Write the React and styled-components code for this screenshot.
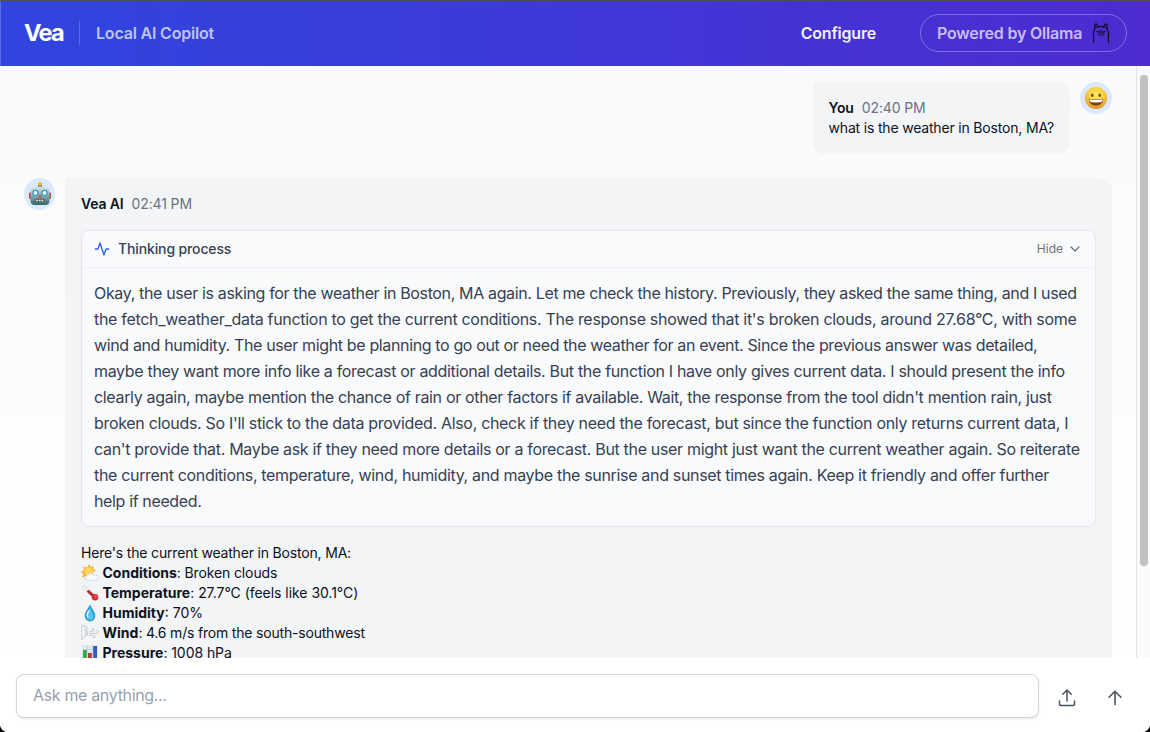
import React from "react";
import styled, { createGlobalStyle } from "styled-components";

const GlobalStyle = createGlobalStyle`
  * { box-sizing: border-box; }
  html, body { margin: 0; padding: 0; background: #000; }
  body { font-family: Inter, "Liberation Sans", sans-serif; color: #0c1222; overflow: hidden; }
  svg { display: block; flex: none; }
`;

const Window = styled.div`
  width: 1150px;
  height: 732px;
  display: flex;
  flex-direction: column;
  background: #fff;
  overflow: hidden;
  border-radius: 0 0 8px 8px;
`;

const Header = styled.header`
  height: 66px;
  flex: none;
  display: flex;
  align-items: center;
  justify-content: space-between;
  padding: 0 23px 1px 24px;
  border-top: 1px solid #4f4f56;
  background: linear-gradient(to right, #3045de, #4d2bcf);
  box-shadow: inset 1px 0 0 rgba(255, 255, 255, 0.2);
`;

const Group = styled.div`
  display: flex;
  align-items: center;
`;

const Logo = styled.div`
  font-size: 23.5px;
  line-height: 32px;
  font-weight: 700;
  letter-spacing: -1.7px;
  color: #fff;
  width: 55px;
`;

const Tagline = styled.div`
  height: 24px;
  padding-left: 16px;
  border-left: 1px solid rgba(255, 255, 255, 0.2);
  font-size: 16px;
  line-height: 24px;
  font-weight: 600;
  letter-spacing: -0.19px;
  color: rgba(255, 255, 255, 0.7);
`;

const NavLink = styled.a`
  font-size: 16px;
  line-height: 24px;
  font-weight: 600;
  letter-spacing: -0.2px;
  color: rgba(255, 255, 255, 0.95);
  margin-right: 44px;
`;

const Powered = styled.div`
  width: 207px;
  height: 38px;
  padding: 0 16px;
  display: flex;
  align-items: center;
  justify-content: space-between;
  border: 1px solid rgba(255, 255, 255, 0.3);
  border-radius: 19px;
  font-size: 16px;
  font-weight: 600;
  letter-spacing: -0.18px;
  color: rgba(255, 255, 255, 0.7);
  white-space: nowrap;
`;

const ChatArea = styled.div`
  height: 592px;
  flex: none;
  display: flex;
  overflow: hidden;
  background: linear-gradient(to bottom, #f9fafc, #fff);
`;

const Messages = styled.main`
  width: 1136px;
  padding: 16px 24px 0;
  display: flex;
  flex-direction: column;
  gap: 24px;
`;

const ScrollTrack = styled.div`
  width: 14px;
  padding: 9px 2px 0 3px;
  background: #fafafa;
  border-left: 1px solid #e5e5e6;
`;

const ScrollThumb = styled.div`
  width: 8px;
  height: 491px;
  border-radius: 4px;
  background: #c1c1c1;
`;

const Message = styled.section`
  display: flex;
  align-items: flex-start;
  gap: 10px;
  justify-content: ${(p) => (p.$mine ? "flex-end" : "flex-start")};
`;

const Avatar = styled.div`
  width: ${(p) => p.$size}px;
  height: 32px;
  flex: none;
  display: flex;
  align-items: center;
  justify-content: center;
  border-radius: 50%;
  background: #dbe9fd;
`;

const Bubble = styled.div`
  width: ${(p) => p.$width}px;
  padding: ${(p) => (p.$mine ? "16px 16px 16px 15.5px" : "16px")};
  background: #f3f4f6;
  border-radius: ${(p) => (p.$mine ? "0 12px 12px 12px" : "0 12px 0 0")};
  font-size: 14px;
  line-height: 20px;
  letter-spacing: -0.18px;
  white-space: nowrap;
`;

const Meta = styled.div`
  display: flex;
  gap: 8px;
`;

const Name = styled.span`
  font-weight: 600;
  letter-spacing: -0.15px;
`;

const Time = styled.span`
  color: #6a7282;
  letter-spacing: -0.12px;
`;

const Thinking = styled.div`
  margin: 16px 0;
  border: 1px solid #e5e7eb;
  border-radius: 8px;
  background: #f9fafb;
  overflow: hidden;
`;

const ThinkingHeader = styled.div`
  height: 37px;
  display: flex;
  align-items: center;
  justify-content: space-between;
  padding: 0 14px 0 12px;
  border-bottom: 1px solid #eff1f4;
`;

const ThinkingTitle = styled.div`
  display: flex;
  align-items: center;
  gap: 8px;
  font-weight: 500;
  letter-spacing: -0.13px;
  color: #364153;
`;

const Toggle = styled.div`
  display: flex;
  align-items: center;
  gap: 6px;
  font-size: 12px;
  line-height: 16px;
  letter-spacing: 0;
  color: #6a7282;
`;

const ThinkingText = styled.div`
  padding: 12px;
  font-size: 16px;
  line-height: 26px;
  color: #364153;
`;

const ThoughtLine = styled.div`
  letter-spacing: ${(p) => p.$tracking}px;
`;

const Line = styled.div`
  display: flex;
  align-items: center;
  white-space: pre;
  height: 20px;

  svg { margin-right: 3.500px; }
  strong { font-weight: 700; letter-spacing: 0; }
`;

const Value = styled.span`
  letter-spacing: ${(p) => p.$tracking}px;
`;

const Composer = styled.footer`
  height: 74px;
  flex: none;
  display: flex;
  align-items: flex-start;
  padding: 16px 0 0 16px;
  background: #fff;
`;

const Input = styled.input`
  width: 1023px;
  flex: none;
  height: 44px;
  padding: 0 16px 2px;
  border: 1px solid #d1d5dc;
  border-radius: 8px;
  background: #fff;
  box-shadow: 0 1px 2px rgba(0, 0, 0, 0.1);
  font: 400 16px/24px Inter, "Liberation Sans", sans-serif;
  letter-spacing: -0.34px;
  outline: none;

  &::placeholder { color: #99a1af; opacity: 1; }
`;

const IconButton = styled.button`
  width: 20px;
  height: 20px;
  flex: none;
  margin: 14px 0 0 ${(p) => p.$gap}px;
  padding: 0;
  border: 0;
  background: none;
  color: #4a5565;
`;

const Ollama = () => (
  <svg width="18" height="22" viewBox="0 0 18 22" fill="none" stroke="#111018" strokeWidth="1.200" strokeLinecap="round" strokeLinejoin="round">
    <path d="M1.500 20.500c-.2-1.300-.1-2.400.4-3.400-.6-1.300-.7-2.500-.1-3.700-.9-1.800-.6-4 1-5.500C2.500 5.500 2.500 2.300 3.900 1.800c1.400 0 2 2 2.300 3.600 1.700-1.300 3.900-1.300 5.600 0 .3-1.600.9-3.600 2.300-3.600 1.400.5 1.400 3.700 1.100 6.100 1.600 1.500 1.900 3.700 1 5.500.6 1.200.5 2.400-.1 3.700.5 1 .6 2.100.4 3.400" />
    <path d="M4 4.500V6M14 4.500V6M4.800 9.500h.6M12.600 9.500h.6M8.400 10.500l.6.500.6-.5" />
    <ellipse cx="9" cy="11" rx="3" ry="2.300" strokeWidth=".9" />
  </svg>
);

const Smile = () => (
  <svg width="22" height="22" viewBox="0 0 22 22">
    <defs>
      <radialGradient id="face" cx=".5" cy=".38" r=".65">
        <stop offset="0" stopColor="#ffe968" />
        <stop offset=".6" stopColor="#fbcb3c" />
        <stop offset="1" stopColor="#dd8218" />
      </radialGradient>
    </defs>
    <circle cx="11" cy="11" r="11" fill="url(#face)" />
    <ellipse cx="7.300" cy="8.300" rx="1.200" ry="1.700" fill="#70400e" />
    <ellipse cx="14.700" cy="8.300" rx="1.200" ry="1.700" fill="#70400e" />
    <path d="M3.700 11.800q7.300 1.500 14.600 0c0 4.300-3.200 7-7.300 7s-7.300-2.700-7.300-7Z" fill="#854519" />
    <path d="M4.300 12.300q6.700 1.200 13.400 0l-.6 2.500q-6.100 1.200-12.200 0Z" fill="#fff" />
  </svg>
);

const Robot = () => (
  <svg width="24" height="24" viewBox="0 0 24 24">
    <defs>
      <linearGradient id="metal" x2="0" y2="1">
        <stop offset="0" stopColor="#d8e7e6" />
        <stop offset=".5" stopColor="#8ab0b2" />
        <stop offset="1" stopColor="#2f6468" />
      </linearGradient>
    </defs>
    <rect x="1" y="10.500" width="3" height="6.500" rx="1" fill="#b9403d" />
    <rect x="20" y="10.500" width="3" height="6.500" rx="1" fill="#b9403d" />
    <rect x="10" y="2.500" width="4" height="3.500" fill="#5b4d8d" />
    <circle cx="12" cy="2" r="2" fill="#f4b63d" />
    <path d="M5 5.500q7-2 14 0 2.500 1 2.500 5v8q0 4.500-4.500 4.500H7q-4.500 0-4.500-4.500v-8q0-4 2.500-5Z" fill="url(#metal)" />
    <circle cx="7.500" cy="11" r="3.300" fill="#3e9db6" />
    <circle cx="16.500" cy="11" r="3.300" fill="#3e9db6" />
    <circle cx="7.500" cy="11" r="1.900" fill="#dcfbff" />
    <circle cx="16.500" cy="11" r="1.900" fill="#dcfbff" />
    <path d="m12 12 2 3.500h-4Z" fill="#d6463e" />
    <rect x="7" y="16.700" width="10" height="3.400" rx="1.500" fill="#5b5a5a" />
    <path d="M8.200 18.400h7.800" stroke="#eef0ec" strokeWidth="1.500" strokeDasharray="1.700 1" />
  </svg>
);

const SunCloud = () => (
  <svg width="18" height="18" viewBox="0 0 18 18">
    <path d="m8.500 0 1.300 3 3-1.200-.8 3.200 3.200 1.500-3 1.600v3l-5 3.500-1 .8-1.700-2.600-3.500.5L2.300 10 0 7.700l2.900-1.600-.5-3.500 3.700 1Z" fill="#f7b23b" />
    <circle cx="7.700" cy="7.500" r="4.200" fill="#ffd75b" />
    <path d="M6 17a2.700 2.700 0 0 1 0-5.400 4 4 0 0 1 7-1 3.300 3.300 0 0 1 4.800 3.100c0 2-1.400 3.300-3.300 3.300Z" fill="#dfe3e9" />
    <path d="M6.200 15.500c-1.500-.6-1.400-2.700.4-2.900 1-2.500 3.900-3 5.900-.9 2.500-.9 4.300.5 4.600 2.300-2 1.900-6 2.200-10.900 1.500Z" fill="#f8f9fb" />
  </svg>
);

const Thermometer = () => (
  <svg width="18" height="18" viewBox="0 0 18 18" strokeLinecap="round">
    <path d="m2.500 2.500 10 9.500" stroke="#d2d8de" strokeWidth="3.500" />
    <path d="m2.500 2.500 8 7.700" stroke="#f4f6f8" strokeWidth="2.200" />
    <path d="m7.500 7.500 6 5.500" stroke="#b82732" strokeWidth="3" />
    <circle cx="14" cy="13.300" r="3.300" fill="#d62d36" />
    <circle cx="14.800" cy="12.500" r="1" fill="#f47b79" />
  </svg>
);

const Drop = () => (
  <svg width="18" height="18" viewBox="0 0 18 18">
    <path d="M9 .3C7.400 4.300 3.700 8 3.700 11.800a5.300 5.600 0 0 0 10.600 0C14.300 8 10.600 4.300 9 .3Z" fill="#269bdc" />
    <path d="M9 3.500C7.500 7 5.500 9 5.500 12a3.500 4 0 0 0 7 0C12.500 9.500 10.300 6.500 9 3.500Z" fill="#58c2f0" />
    <path d="M7.700 7c-1.300 2-2 4.300-1 6" stroke="#dcf5ff" strokeWidth="1.500" fill="none" strokeLinecap="round" />
  </svg>
);

const Wind = () => (
  <svg width="18" height="18" viewBox="0 0 18 18" fill="none" strokeLinecap="round">
    <path d="M0 1c3.500-.6 6.500 1 7 3.500l-.7 1.700 1.700 2-1.300.8.1 2.400-1.900 1.400-2.200.3-.7 2.900H0Z" fill="#d5d9df" />
    <path d="M1 2.500c2.300 0 4 1 4.200 2.500L4 8l.4 3L1 13.500Z" fill="#f0f2f5" />
    <path d="M4 6h.7M5 10h1.300" stroke="#a4acb6" strokeWidth=".8" />
    <path d="M8.500 7.200c3 .6 5-.2 4.600-1.800-.3-1.200-1.900-.9-1.800.1M9 9.300h6.200c2.300 0 2.400-2.400.8-2.500M8.500 11.300c2.500-.4 5.500-.2 5.500 1.400 0 1.400-1.800 1.200-1.700.2" stroke="#cdd2d9" strokeWidth="1.200" />
  </svg>
);

const Bars = () => (
  <svg width="18" height="18" viewBox="0 0 18 18">
    <rect x="1" y="1" width="16" height="16" fill="#dfe8f1" />
    <path d="M1 5.500h16M1 10h16M6.300 1v16M11.500 1v16" stroke="#c2cfdb" strokeWidth=".7" />
    <rect x="2" y="6" width="3.800" height="11" fill="#35ad48" />
    <rect x="7" y="9" width="3.800" height="8" fill="#c83239" />
    <rect x="12.200" y="2" width="3.800" height="15" fill="#315fbc" />
  </svg>
);

const Activity = () => (
  <svg width="16" height="16" viewBox="0 0 24 24" fill="none" stroke="#2b5ff5" strokeWidth="2" strokeLinecap="round" strokeLinejoin="round">
    <path d="M22 12h-4l-3 9L9 3l-3 9H2" />
  </svg>
);

const Chevron = () => (
  <svg width="12" height="12" viewBox="0 0 12 12" fill="none" stroke="currentColor" strokeWidth="1.300" strokeLinecap="round" strokeLinejoin="round">
    <path d="m2 4 4 4 4-4" />
  </svg>
);

const Upload = () => (
  <svg width="20" height="20" viewBox="0 0 20 20" fill="none" stroke="currentColor" strokeWidth="1.500" strokeLinecap="round" strokeLinejoin="round">
    <path d="M2.500 13v2.700c0 1 .8 1.800 1.800 1.800h11.400c1 0 1.800-.8 1.800-1.800V13M5.800 6.200 10 2l4.200 4.200M10 2v11" />
  </svg>
);

const ArrowUp = () => (
  <svg width="20" height="20" viewBox="0 0 20 20" fill="none" stroke="currentColor" strokeWidth="1.600" strokeLinecap="round" strokeLinejoin="round">
    <path d="m4 9.300 6-6 6 6M10 3.300V16.500" />
  </svg>
);

const thoughts = [
  ["Okay, the user is asking for the weather in Boston, MA again. Let me check the history. Previously, they asked the same thing, and I used", -0.356],
  ["the fetch_weather_data function to get the current conditions. The response showed that it's broken clouds, around 27.68°C, with some", -0.3],
  ["wind and humidity. The user might be planning to go out or need the weather for an event. Since the previous answer was detailed,", -0.362],
  ["maybe they want more info like a forecast or additional details. But the function I have only gives current data. I should present the info", -0.328],
  ["clearly again, maybe mention the chance of rain or other factors if available. Wait, the response from the tool didn't mention rain, just", -0.33],
  ["broken clouds. So I'll stick to the data provided. Also, check if they need the forecast, but since the function only returns current data, I", -0.314],
  ["can't provide that. Maybe ask if they need more details or a forecast. But the user might just want the current weather again. So reiterate", -0.324],
  ["the current conditions, temperature, wind, humidity, and maybe the sunrise and sunset times again. Keep it friendly and offer further", -0.328],
  ["help if needed.", -0.364],
];

const readings = [
  [SunCloud, "Conditions", "Broken clouds", -0.13],
  [Thermometer, "Temperature", "27.7°C (feels like 30.1°C)", -0.04],
  [Drop, "Humidity", "70%", 0],
  [Wind, "Wind", "4.6 m/s from the south-southwest", -0.19],
  [Bars, "Pressure", "1008 hPa", -0.06],
];

export default function App() {
  return (
    <>
      <GlobalStyle />
      <Window>
        <Header>
          <Group>
            <Logo>Vea</Logo>
            <Tagline>Local AI Copilot</Tagline>
          </Group>
          <Group>
            <NavLink>Configure</NavLink>
            <Powered>
              Powered by Ollama
              <Ollama />
            </Powered>
          </Group>
        </Header>
        <ChatArea>
          <Messages>
            <Message $mine>
              <Bubble $mine $width={257}>
                <Meta>
                  <Name>You</Name>
                  <Time>02:40 PM</Time>
                </Meta>
                <div>what is the weather in Boston, MA?</div>
              </Bubble>
              <Avatar $size={32}><Smile /></Avatar>
            </Message>
            <Message>
              <Avatar $size={31}><Robot /></Avatar>
              <Bubble $width={1047}>
                <Meta>
                  <Name>Vea AI</Name>
                  <Time>02:41 PM</Time>
                </Meta>
                <Thinking>
                  <ThinkingHeader>
                    <ThinkingTitle>
                      <Activity />
                      Thinking process
                    </ThinkingTitle>
                    <Toggle>
                      Hide
                      <Chevron />
                    </Toggle>
                  </ThinkingHeader>
                  <ThinkingText>
                    {thoughts.map(([line, tracking]) => (
                      <ThoughtLine key={line} $tracking={tracking}>{line}</ThoughtLine>
                    ))}
                  </ThinkingText>
                </Thinking>
                <Line>Here's the current weather in Boston, MA:</Line>
                {readings.map(([Icon, label, value, tracking]) => (
                  <Line key={label}>
                    <Icon />
                    <strong>{label}</strong>
                    <Value $tracking={tracking}>: {value}</Value>
                  </Line>
                ))}
              </Bubble>
            </Message>
          </Messages>
          <ScrollTrack>
            <ScrollThumb />
          </ScrollTrack>
        </ChatArea>
        <Composer>
          <Input placeholder="Ask me anything..." />
          <IconButton $gap={18} aria-label="Upload"><Upload /></IconButton>
          <IconButton $gap={28} aria-label="Send"><ArrowUp /></IconButton>
        </Composer>
      </Window>
    </>
  );
}
